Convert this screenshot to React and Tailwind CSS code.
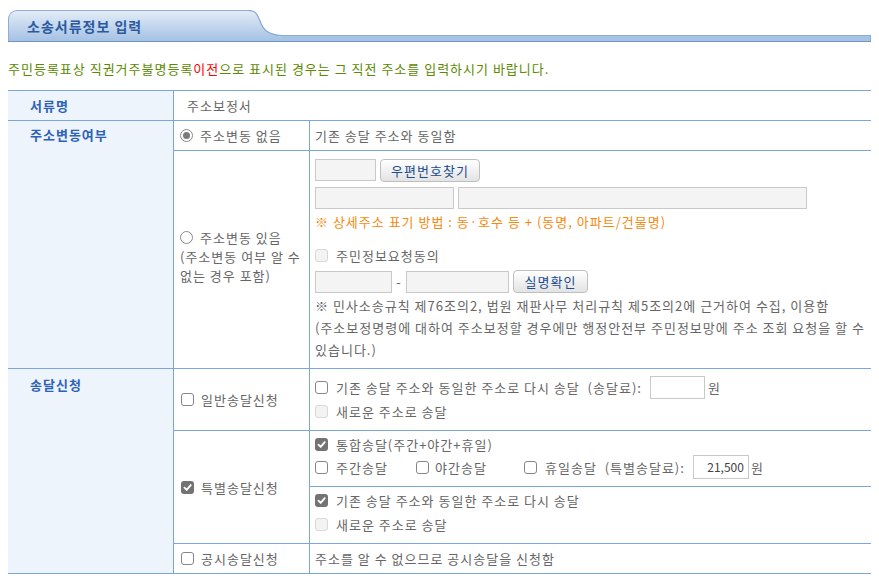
import React from "react";

function Box({ state }) {
  if (state === "checked")
    return (
      <span className="inline-flex w-[13px] h-[13px] rounded-[3px] bg-[#737373] items-center justify-center shrink-0">
        <svg width="9" height="9" viewBox="0 0 10 10">
          <path d="M1.6 5.2 L4.1 7.7 L8.6 2.3" stroke="white" strokeWidth="2" fill="none" strokeLinecap="round" strokeLinejoin="round" />
        </svg>
      </span>
    );
  if (state === "disabled")
    return <span className="inline-block w-[13px] h-[13px] rounded-[3px] border border-[#d8d8d8] bg-[#f3f3f3] shrink-0" />;
  return <span className="inline-block w-[13px] h-[13px] rounded-[3px] border border-[#868686] bg-white shrink-0" />;
}

function Radio({ checked }) {
  return (
    <span className="inline-flex w-[13px] h-[13px] rounded-full border border-[#8a8a8a] bg-white items-center justify-center shrink-0 align-middle">
      {checked ? <span className="w-[7px] h-[7px] rounded-full bg-[#7a7a7a]" /> : null}
    </span>
  );
}

function Field({ w, h = "h-[22px]", children, white }) {
  return (
    <span
      className={
        (white ? "bg-white " : "bg-[#f4f4f4] ") +
        "inline-flex items-center justify-end pr-[4px] border border-[#c9c9c9] shrink-0 " +
        w +
        " " +
        h
      }
    >
      {children}
    </span>
  );
}

function Btn({ w, children }) {
  return (
    <span
      className={
        "inline-flex items-center justify-center h-[23px] rounded-[4px] border border-[#bfbfbf] bg-linear-to-b from-white to-[#e3e3e3] text-[#1b4d8f] shrink-0 " +
        w
      }
    >
      {children}
    </span>
  );
}

export default function App() {
  return (
    <div className="w-[879px] h-[581px] bg-white font-['Noto_Sans_CJK_KR','Noto_Sans',sans-serif] text-[13px] tracking-[1px] text-[#666] leading-none overflow-hidden">
      {/* Tab header */}
      <div className="pt-[10px] pl-[8px] pr-[8px]">
        <div className="flex items-end h-[32px] border-b border-[#6f95c5]">
          <div className="w-[240px] h-full rounded-tl-[9px] border-l border-t border-[#8eaed6] bg-linear-to-b from-[#e3ecf7] to-[#a4c1e4] flex items-center pl-[18px] font-bold text-[14px] tracking-[1px] text-[#2b5a9f]">
            소송서류정보 입력
          </div>
          <svg width="34" height="31" viewBox="0 0 34 31" className="block shrink-0">
            <defs>
              <linearGradient id="tg" x1="0" y1="0" x2="0" y2="1">
                <stop offset="0" stopColor="#e3ecf7" />
                <stop offset="1" stopColor="#a4c1e4" />
              </linearGradient>
            </defs>
            <path d="M0 0.5 C8 0.5 9 4 12 11 C15 19 19 25 34 25.5 V31 H0 Z" fill="url(#tg)" />
            <path d="M0 0.5 C8 0.5 9 4 12 11 C15 19 19 25 34 25.5" fill="none" stroke="#86a8d3" strokeWidth="1.2" />
          </svg>
          <div className="flex-1 h-[6px] bg-[#a6c2e4] border-t border-r border-[#8bacd4]" />
        </div>
      </div>

      {/* Notice */}
      <div className="mt-[18px] pl-[8px] h-[18px] leading-[18px] text-[#5b8a00]">
        주민등록표상 직권거주불명등록<span className="text-[#ff0000]">이전</span>으로 표시된 경우는 그 직전 주소를 입력하시기 바랍니다.
      </div>

      {/* Table */}
      <div className="mt-[12px] ml-[8px] w-[863px] border-t border-b border-[#7ba5dd]">
        {/* 서류명 */}
        <div className="flex h-[29px]">
          <div className="w-[166px] bg-[#eef4fc] border-r border-[#7ba5dd] pl-[22px] flex items-center font-bold text-[#2d62b6]">
            서류명
          </div>
          <div className="flex-1 flex items-center pl-[13px]">주소보정서</div>
        </div>

        {/* 주소변동여부 */}
        <div className="flex border-t border-[#7ba5dd]">
          <div className="w-[166px] bg-[#eef4fc] border-r border-[#7ba5dd] pl-[22px] pt-[6px] leading-[16px] font-bold text-[#2d62b6]">
            주소변동여부
          </div>
          <div className="flex-1 flex flex-col">
            <div className="flex h-[29px]">
              <div className="w-[136px] border-r border-[#7ba5dd] flex items-center pl-[6px] gap-[7px]">
                <Radio checked />
                <span>주소변동 없음</span>
              </div>
              <div className="flex-1 flex items-center pl-[5px]">기존 송달 주소와 동일함</div>
            </div>
            <div className="flex h-[218px] border-t border-[#7ba5dd]">
              <div className="w-[136px] border-r border-[#7ba5dd] flex items-center pl-[6px]">
                <div className="leading-[19px] mt-[-7px]">
                  <div className="flex items-center gap-[7px]">
                    <Radio />
                    <span>주소변동 있음</span>
                  </div>
                  <div className="whitespace-nowrap">(주소변동 여부 알 수</div>
                  <div className="whitespace-nowrap">없는 경우 포함)</div>
                </div>
              </div>
              <div className="flex-1 flex flex-col pl-[5px] pt-[7px]">
                <div className="flex items-center gap-[4px] h-[24px]">
                  <Field w="w-[61px]" />
                  <Btn w="w-[100px]">우편번호찾기</Btn>
                </div>
                <div className="flex items-center gap-[4px] mt-[5px]">
                  <Field w="w-[139px]" />
                  <Field w="w-[349px]" />
                </div>
                <div className="mt-[5px] leading-[16px] text-[#f7890d] whitespace-nowrap">
                  ※ 상세주소 표기 방법 : 동·호수 등 + (동명, 아파트/건물명)
                </div>
                <div className="mt-[17px] flex items-center gap-[8px] h-[16px]">
                  <Box state="disabled" />
                  <span>주민정보요청동의</span>
                </div>
                <div className="mt-[6px] flex items-center h-[25px]">
                  <Field w="w-[77px]" />
                  <span className="w-[14px] text-center">-</span>
                  <Field w="w-[103px]" />
                  <span className="ml-[4px]">
                    <Btn w="w-[75px]">실명확인</Btn>
                  </span>
                </div>
                <div className="mt-[1px] leading-[22px] whitespace-nowrap">
                  ※ 민사소송규칙 제76조의2, 법원 재판사무 처리규칙 제5조의2에 근거하여 수집, 이용함
                </div>
                <div className="leading-[22px] whitespace-nowrap">
                  (주소보정명령에 대하여 주소보정할 경우에만 행정안전부 주민정보망에 주소 조회 요청을 할 수
                </div>
                <div className="leading-[22px]">있습니다.)</div>
              </div>
            </div>
          </div>
        </div>

        {/* 송달신청 */}
        <div className="flex border-t border-[#7ba5dd]">
          <div className="w-[166px] bg-[#eef4fc] border-r border-[#7ba5dd] pl-[22px] pt-[8px] leading-[16px] font-bold text-[#2d62b6]">
            송달신청
          </div>
          <div className="flex-1 flex flex-col">
            {/* 일반 */}
            <div className="flex h-[61px]">
              <div className="w-[136px] border-r border-[#7ba5dd] flex items-center pl-[7px] gap-[7px]">
                <Box />
                <span>일반송달신청</span>
              </div>
              <div className="flex-1 flex flex-col pl-[5px] pt-[6px]">
                <div className="flex items-center h-[24px] gap-[8px]">
                  <Box />
                  <span className="whitespace-nowrap">기존 송달 주소와 동일한 주소로 다시 송달 &nbsp;(송달료):</span>
                  <span className="flex items-center">
                    <Field w="w-[55px]" h="h-[23px]" white />
                    <span className="ml-[3px]">원</span>
                  </span>
                </div>
                <div className="flex items-center h-[24px] gap-[8px]">
                  <Box state="disabled" />
                  <span>새로운 주소로 송달</span>
                </div>
              </div>
            </div>

            {/* 특별 */}
            <div className="flex h-[113px] border-t border-[#7ba5dd]">
              <div className="w-[136px] border-r border-[#7ba5dd] flex items-center pl-[7px] gap-[7px]">
                <Box state="checked" />
                <span>특별송달신청</span>
              </div>
              <div className="flex-1 flex flex-col">
                <div className="h-[55px] pl-[5px] pt-[3px] flex flex-col">
                  <div className="flex items-center h-[21px] gap-[8px]">
                    <Box state="checked" />
                    <span>통합송달(주간+야간+휴일)</span>
                  </div>
                  <div className="flex items-center h-[24px]">
                    <div className="w-[101px] flex items-center gap-[8px]">
                      <Box />
                      <span>주간송달</span>
                    </div>
                    <div className="w-[108px] flex items-center gap-[6px]">
                      <Box />
                      <span>야간송달</span>
                    </div>
                    <div className="flex items-center gap-[8px]">
                      <Box />
                      <span className="whitespace-nowrap">휴일송달 &nbsp;(특별송달료):</span>
                      <span className="flex items-center">
                        <Field w="w-[56px]" h="h-[24px]" white>
                          <span className="tracking-[0px] text-[12px] text-[#444]">21,500</span>
                        </Field>
                        <span className="ml-[2px]">원</span>
                      </span>
                    </div>
                  </div>
                </div>
                <div className="h-[58px] border-t border-[#7ba5dd] pl-[5px] pt-[3px] flex flex-col gap-[2px]">
                  <div className="flex items-center h-[22px] gap-[8px]">
                    <Box state="checked" />
                    <span>기존 송달 주소와 동일한 주소로 다시 송달</span>
                  </div>
                  <div className="flex items-center h-[22px] gap-[8px]">
                    <Box state="disabled" />
                    <span>새로운 주소로 송달</span>
                  </div>
                </div>
              </div>
            </div>

            {/* 공시 */}
            <div className="flex h-[30px] border-t border-[#7ba5dd]">
              <div className="w-[136px] border-r border-[#7ba5dd] flex items-center pl-[7px] gap-[7px]">
                <Box />
                <span>공시송달신청</span>
              </div>
              <div className="flex-1 flex items-center pl-[5px]">주소를 알 수 없으므로 공시송달을 신청함</div>
            </div>
          </div>
        </div>
      </div>
    </div>
  );
}
